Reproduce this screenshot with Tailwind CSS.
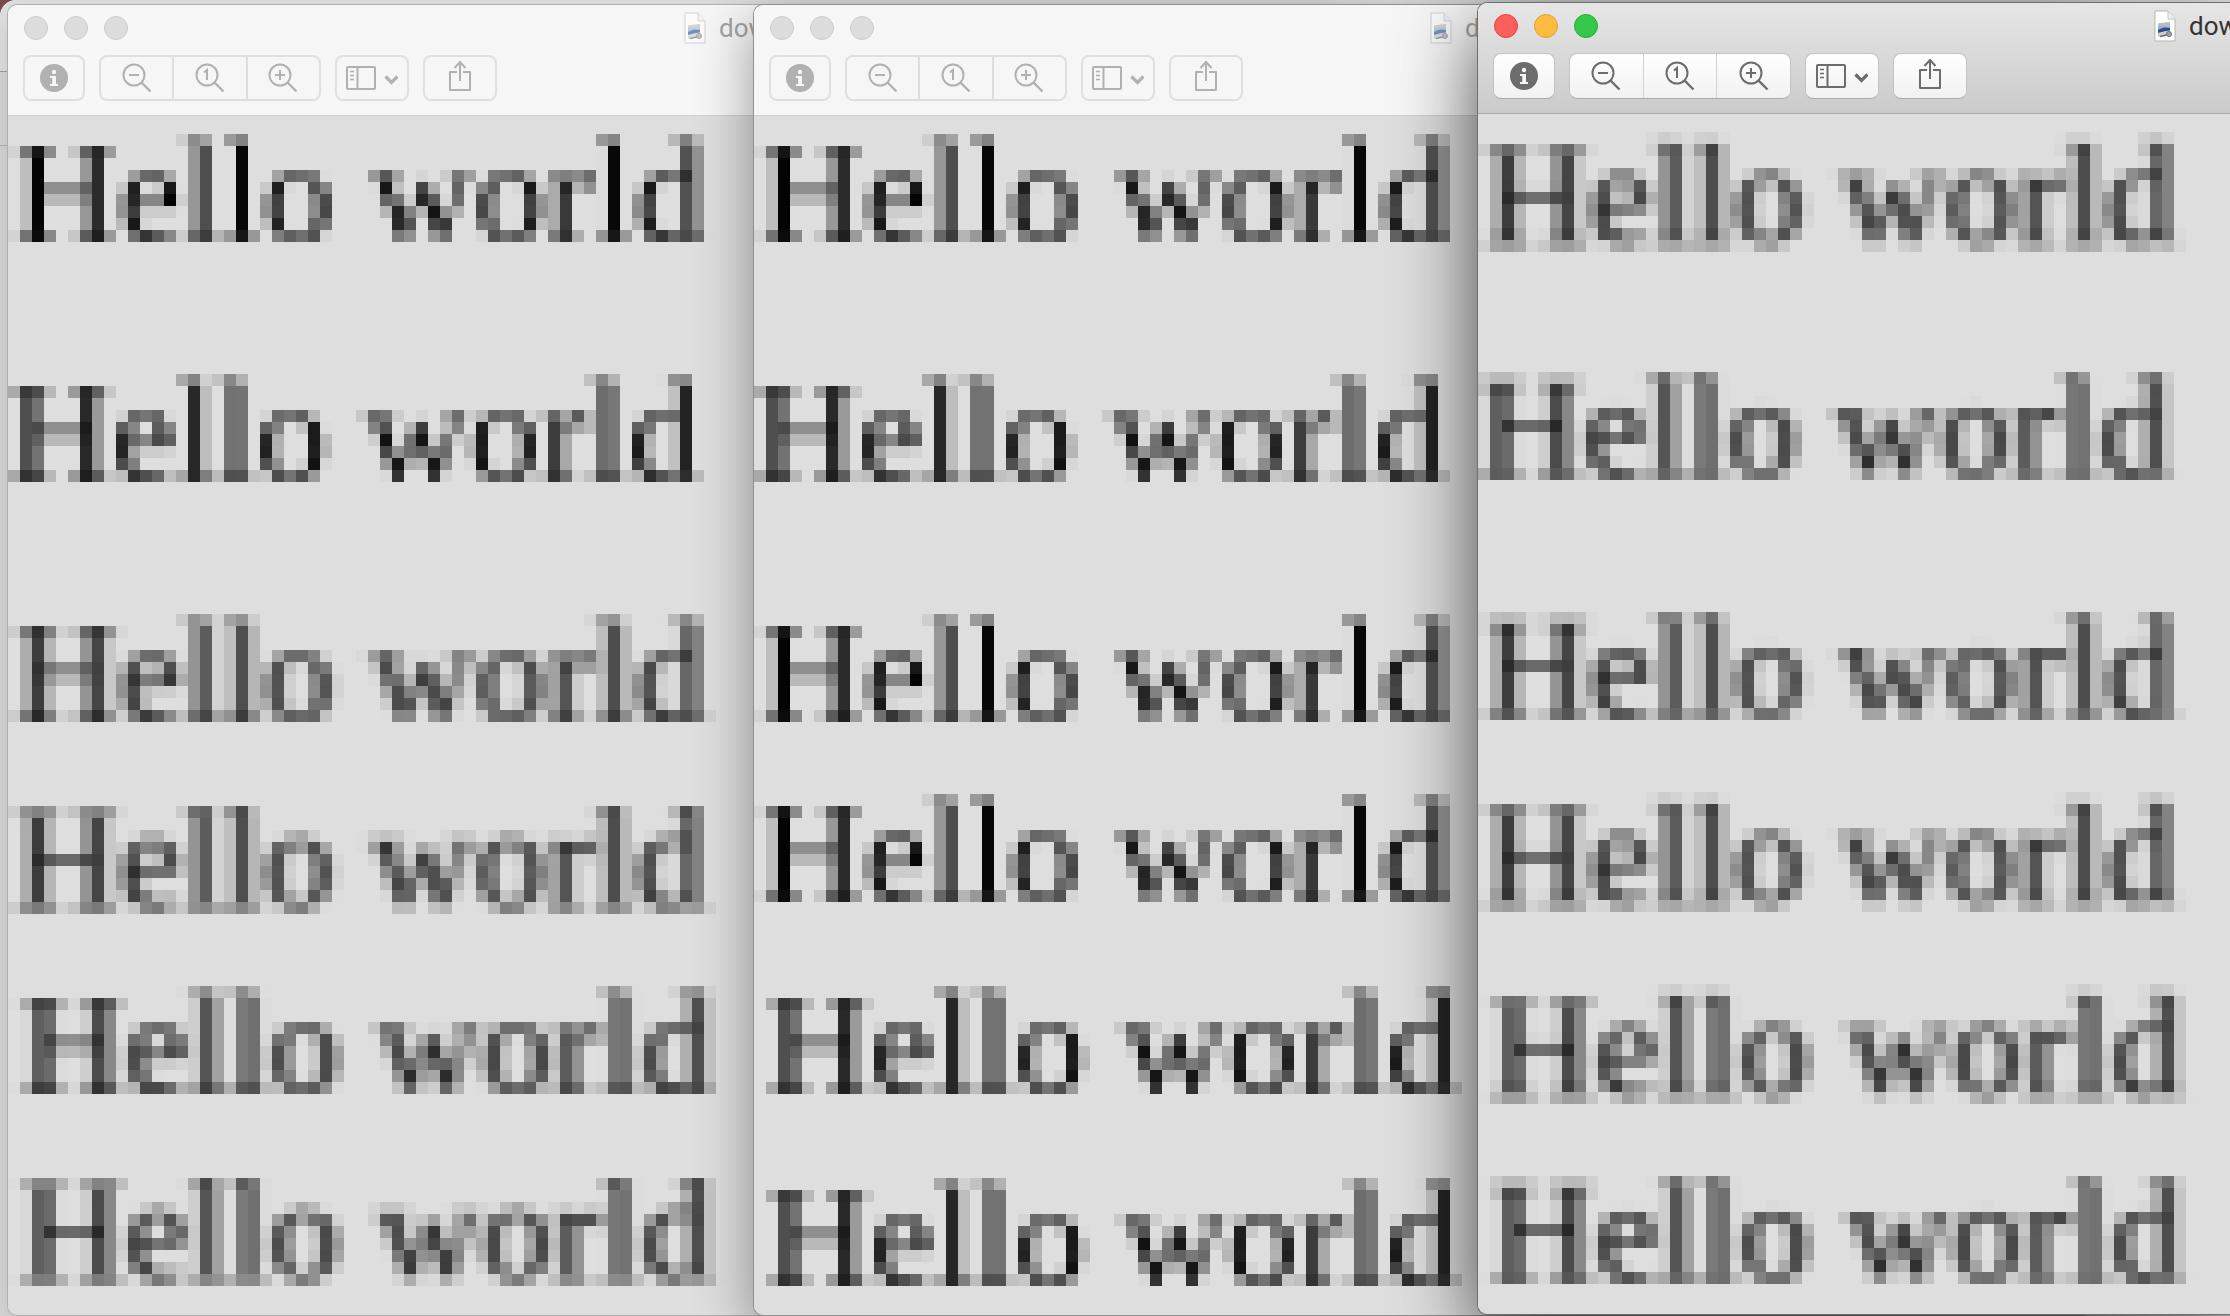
<!DOCTYPE html>
<html lang="en">
<head>
<meta charset="utf-8">
<title>Preview windows</title>
<script src="https://cdn.jsdelivr.net/npm/@tailwindcss/browser@4"></script>
</head>
<body class="relative h-screen overflow-hidden bg-[#7c4a50] font-[Roboto,sans-serif]">

<svg class="absolute size-0" aria-hidden="true">
  <defs>
    <!-- Mosaic filters: average each 12px cell, sample its centre, spread the sample over the cell -->
    <filter id="mosaic" x="0" y="0" width="100%" height="100%" color-interpolation-filters="sRGB">
      <feConvolveMatrix in="SourceGraphic" order="12 1" kernelMatrix="1 1 1 1 1 1 1 1 1 1 1 1" targetX="5" targetY="0" edgeMode="duplicate" preserveAlpha="true"/>
      <feConvolveMatrix order="1 12" kernelMatrix="1 1 1 1 1 1 1 1 1 1 1 1" targetX="0" targetY="5" edgeMode="duplicate" preserveAlpha="true" result="avg"/>
      <feFlood x="5" y="5" width="1" height="1" flood-color="#000"/>
      <feComposite x="0" y="0" width="12" height="12"/>
      <feTile result="grid"/>
      <feComposite in="avg" in2="grid" operator="in"/>
      <feMorphology operator="dilate" radius="5" result="cells"/>
      <feOffset in="cells" dx="1" dy="0" result="cx"/>
      <feMerge result="rows"><feMergeNode in="cx"/><feMergeNode in="cells"/></feMerge>
      <feOffset in="rows" dx="0" dy="1" result="cy"/>
      <feMerge><feMergeNode in="cy"/><feMergeNode in="rows"/></feMerge>
    </filter>
    <filter id="mosaic-soft" x="0" y="0" width="100%" height="100%" color-interpolation-filters="sRGB">
      <feConvolveMatrix in="SourceGraphic" order="16 1" kernelMatrix="1 1 1 1 1 1 1 1 1 1 1 1 1 1 1 1" targetX="8" targetY="0" edgeMode="duplicate" preserveAlpha="true"/>
      <feConvolveMatrix order="12 1" kernelMatrix="1 1 1 1 1 1 1 1 1 1 1 1" targetX="5" targetY="0" edgeMode="duplicate" preserveAlpha="true"/>
      <feConvolveMatrix order="1 12" kernelMatrix="1 1 1 1 1 1 1 1 1 1 1 1" targetX="0" targetY="5" edgeMode="duplicate" preserveAlpha="true" result="avg"/>
      <feFlood x="5" y="5" width="1" height="1" flood-color="#000"/>
      <feComposite x="0" y="0" width="12" height="12"/>
      <feTile result="grid"/>
      <feComposite in="avg" in2="grid" operator="in"/>
      <feMorphology operator="dilate" radius="5" result="cells"/>
      <feOffset in="cells" dx="1" dy="0" result="cx"/>
      <feMerge result="rows"><feMergeNode in="cx"/><feMergeNode in="cells"/></feMerge>
      <feOffset in="rows" dx="0" dy="1" result="cy"/>
      <feMerge><feMergeNode in="cy"/><feMergeNode in="rows"/></feMerge>
    </filter>
    <linearGradient id="sky" x1="0" y1="0" x2="0" y2="1"><stop offset="0" stop-color="#b9d2ee"/><stop offset="1" stop-color="#5f86c4"/></linearGradient>
  </defs>
  <symbol id="i-info" viewBox="0 0 28 28"><circle cx="14" cy="14" r="14" fill="currentColor"/><g class="fill-[#f6f6f6]"><circle cx="14" cy="8" r="2.2"/><path d="M10 12h6v8h2v2h-8v-2h2.200v-6H10z"/></g></symbol>
  <symbol id="i-lens" viewBox="0 0 30 30"><circle cx="12" cy="12" r="10.500" fill="none" stroke="currentColor" stroke-width="2"/><path d="M19.500 19.500l9 9" stroke="currentColor" stroke-width="2.400"/></symbol>
  <symbol id="i-out" viewBox="0 0 30 30"><use href="#i-lens"/><path d="M7 12h10" stroke="currentColor" stroke-width="2"/></symbol>
  <symbol id="i-actual" viewBox="0 0 30 30"><use href="#i-lens"/><path d="M9 9.500l3-2.500V17" fill="none" stroke="currentColor" stroke-width="2"/></symbol>
  <symbol id="i-in" viewBox="0 0 30 30"><use href="#i-lens"/><path d="M7 12h10M12 7v10" stroke="currentColor" stroke-width="2"/></symbol>
  <symbol id="i-side" viewBox="0 0 52 24"><g fill="none" stroke="currentColor"><rect x="1" y="1" width="28" height="22" rx="1" stroke-width="2"/><path d="M11.500 1v22" stroke-width="2"/><path d="M4 5.500h4M4 9.500h4M4 13.500h4" stroke-width="1.600"/><path d="M39.500 10.500l6 6 6-6" stroke-width="3.200"/></g></symbol>
  <symbol id="i-share" viewBox="0 0 24 32"><g fill="none" stroke="currentColor" stroke-width="2"><path d="M9 12H2v18h20V12h-7" stroke-linejoin="round"/><path d="M12 21V2M6.500 8L12 2l5.500 6"/></g></symbol>
  <symbol id="i-doc" viewBox="0 0 22 32"><path d="M1 1h13l7 8v22H1z" fill="#fff" stroke="#b5b5b5"/><path d="M14 1v8h7" fill="#f1f1f1" stroke="#c4c4c4"/><path d="M4 13.500l12-1.500v9l-12 3z" fill="url(#sky)"/><path d="M4 13.500l12-1.500v1.500l-12 1.500z" fill="#d9b98a"/><path d="M4 20l6-2.500 6 .5v2l-12 3z" fill="#2f4a86"/><path d="M4 23l8-2 4 1-6 4-6 1z" fill="#c9ccd4"/><path d="M6 26.500l9-2" stroke="#6b6b6b" stroke-width="1.500"/><circle cx="15" cy="24" r="2.500" fill="#a3a3a3" stroke="#707070"/></symbol>
</svg>

<div class="absolute inset-0 rounded-tl-2xl bg-[#d9d9d9]">
  <div class="h-[72px] rounded-tl-2xl border-b border-[#9f9f9f] bg-[#e2e2e2]"></div>
  <div class="h-[74px] border-b border-[#b4b4b4]"></div>
</div>

<main id="desktop"></main>

<script>
const windows = [
  {
    frame: "left-2 top-[5px] h-full max-h-[calc(100%-6px)] w-3/5 rounded-[9px] shadow-[0_0_0_1px_#b0b0b0,0_10px_40px_rgba(0,0,0,0.15)]",
    active: false,
    lines: [
      "mb-24 pl-1.5 leading-[142px] [filter:url(#mosaic)]",
      "mb-24 pl-0 leading-[142px] [filter:url(#mosaic)]",
      "mb-9 pl-1.5 leading-[142px] [filter:url(#mosaic-soft)]",
      "mb-12 pl-1.5 leading-[154px] [filter:url(#mosaic-soft)]",
      "mb-12 pl-3 leading-[142px] [filter:url(#mosaic-soft)]",
      "pl-3 leading-[130px] [filter:url(#mosaic-soft)]"
    ]
  },
  {
    frame: "left-[754px] top-[5px] h-full max-h-[calc(100%-6px)] w-3/5 rounded-[9px] shadow-[0_0_0_1px_#8f8f8f,0_16px_56px_rgba(0,0,0,0.4)]",
    active: false,
    lines: [
      "mb-24 pl-1.5 leading-[142px] [filter:url(#mosaic)]",
      "mb-24 pl-0 leading-[142px] [filter:url(#mosaic)]",
      "mb-9 pl-1.5 leading-[142px] [filter:url(#mosaic)]",
      "mb-12 pl-1.5 leading-[142px] [filter:url(#mosaic)]",
      "mb-12 pl-3 leading-[142px] [filter:url(#mosaic)]",
      "pl-3 leading-[142px] [filter:url(#mosaic)]"
    ]
  },
  {
    frame: "left-[1478px] right-0 top-[3px] h-full max-h-[calc(100%-5px)] rounded-l-[9px] shadow-[0_0_0_1px_#6f6f6f,0_24px_80px_rgba(0,0,0,0.7)]",
    active: true,
    lines: [
      "mb-24 pl-1.5 leading-[150px] [filter:url(#mosaic-soft)]",
      "mb-24 pl-0 leading-[136px] [filter:url(#mosaic-soft)]",
      "mb-9 pl-1.5 leading-[136px] [filter:url(#mosaic-soft)]",
      "mb-12 pl-1.5 leading-[150px] [filter:url(#mosaic-soft)]",
      "mb-12 pl-3 leading-[150px] [filter:url(#mosaic-soft)]",
      "pl-3 leading-[136px] [filter:url(#mosaic-soft)]"
    ]
  }
];

const lights = {
  true: ["bg-[#fc605b] border-[#e0443e]", "bg-[#fdbc40] border-[#dfa035]", "bg-[#34c84a] border-[#24ab35]"],
  false: ["bg-[#dcdcdc] border-[#cdcdcd]", "bg-[#dcdcdc] border-[#cdcdcd]", "bg-[#dcdcdc] border-[#cdcdcd]"]
};
const icon = (id, size) => `<svg class="${size}" aria-hidden="true"><use href="#${id}"/></svg>`;

document.getElementById("desktop").innerHTML = windows.map(w => {
  const bar = w.active
    ? "bg-linear-to-b from-[#e6e6e6] to-[#cbcbcb] border-[#a8a8a8] text-[#6c6c6c]"
    : "bg-[#f6f6f6] border-[#cfcfcf] text-[#b1b1b1]";
  const box = w.active
    ? "border border-[#c3c3c3] border-b-[#a9a9a9] bg-linear-to-b from-white to-[#f1f1f1]"
    : "border-2 border-[#dfdfdf]";
  const split = w.active ? "border-r border-[#d2d2d2]" : "border-r-2 border-[#dfdfdf]";
  const title = w.active ? "text-[#333]" : "text-[#a3a3a3]";
  const doc = w.active ? "h-8 w-6 shrink-0" : "h-8 w-6 shrink-0 opacity-60";
  const names = ["Close", "Minimize", "Zoom window"];
  return `
  <section class="absolute flex flex-col overflow-hidden bg-[#dedede] ${w.frame}">
    <header class="flex h-[111px] shrink-0 flex-col gap-[15px] border-b pt-[11px] ${bar}">
      <div class="flex h-6 items-center pl-4">
        <div class="flex w-[659px] shrink-0 gap-4">
          ${lights[w.active].map((c, i) => `<button aria-label="${names[i]}" class="size-6 rounded-full border ${c}"></button>`).join("")}
        </div>
        ${icon("i-doc", doc)}
        <h1 class="min-w-0 overflow-hidden pl-3 text-[26px] leading-8 ${title}">download</h1>
      </div>
      <div class="flex h-[46px] gap-[14px] pl-[15px]">
        <button aria-label="Info" class="flex w-[62px] items-center justify-center rounded-lg ${box}">${icon("i-info", "size-7")}</button>
        <div class="flex w-[222px] rounded-lg ${box}">
          <button aria-label="Zoom out" class="flex flex-1 items-center justify-center ${split}">${icon("i-out", "size-[30px]")}</button>
          <button aria-label="Actual size" class="flex flex-1 items-center justify-center ${split}">${icon("i-actual", "size-[30px]")}</button>
          <button aria-label="Zoom in" class="flex flex-1 items-center justify-center">${icon("i-in", "size-[30px]")}</button>
        </div>
        <button aria-label="View" class="flex w-[74px] items-center justify-center rounded-lg ${box}">${icon("i-side", "h-6 w-[52px]")}</button>
        <button aria-label="Share" class="flex w-[74px] items-center justify-center rounded-lg pb-1 ${box}">${icon("i-share", "h-8 w-6")}</button>
      </div>
    </header>
    <div class="w-[744px] pt-[6px] font-['Liberation_Serif',serif] text-[144px] text-black">
      ${w.lines.map(l => `<p class="h-36 overflow-hidden bg-[#dedede] whitespace-nowrap ${l}">Hello world</p>`).join("")}
    </div>
  </section>`;
}).join("");
</script>
</body>
</html>
